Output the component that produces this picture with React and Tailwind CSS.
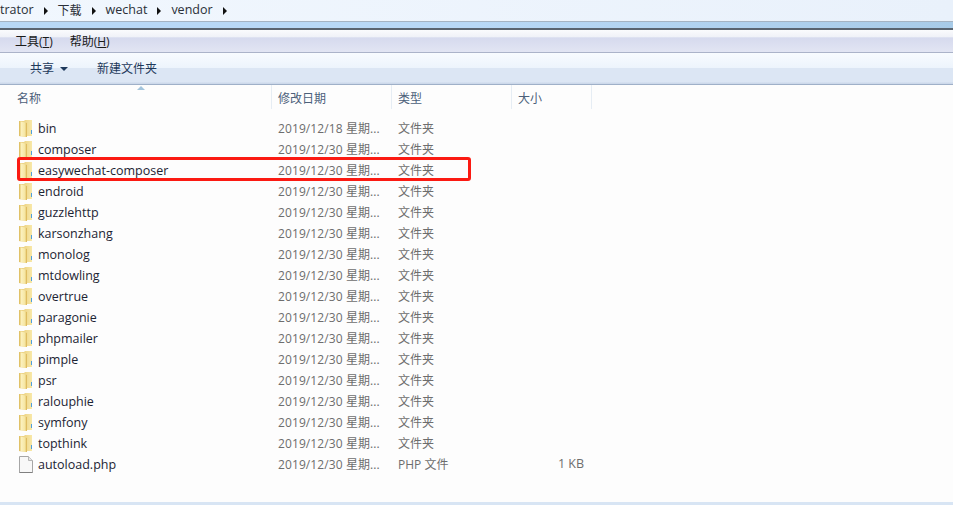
const FONT = "font-['Open_Sans','Noto_Sans_CJK_SC',sans-serif]";

const rows = [
  ['bin', '2019/12/18 星期...'],
  ['composer', '2019/12/30 星期...'],
  ['easywechat-composer', '2019/12/30 星期...'],
  ['endroid', '2019/12/30 星期...'],
  ['guzzlehttp', '2019/12/30 星期...'],
  ['karsonzhang', '2019/12/30 星期...'],
  ['monolog', '2019/12/30 星期...'],
  ['mtdowling', '2019/12/30 星期...'],
  ['overtrue', '2019/12/30 星期...'],
  ['paragonie', '2019/12/30 星期...'],
  ['phpmailer', '2019/12/30 星期...'],
  ['pimple', '2019/12/30 星期...'],
  ['psr', '2019/12/30 星期...'],
  ['ralouphie', '2019/12/30 星期...'],
  ['symfony', '2019/12/30 星期...'],
  ['topthink', '2019/12/30 星期...'],
];

function FolderIcon() {
  return (
    <svg width="14" height="17" viewBox="0 0 14 17" className="shrink-0">
      <defs>
        <linearGradient id="ffront" x1="0" x2="1" y1="0" y2="0">
          <stop offset="0" stopColor="#d9b550" />
          <stop offset="0.3" stopColor="#fbf0bd" />
          <stop offset="0.75" stopColor="#f6e6a2" />
          <stop offset="1" stopColor="#d6ae4a" />
        </linearGradient>
        <linearGradient id="fback" x1="0" x2="1" y1="0" y2="0">
          <stop offset="0" stopColor="#e6c873" />
          <stop offset="1" stopColor="#f8e8a8" />
        </linearGradient>
      </defs>
      <path d="M0 1 H5 L6 0 H13 V16 H8 V17 L0 16 Z" fill="url(#fback)" />
      <path d="M0 1 L8 3 V17 L0 16 Z" fill="url(#ffront)" />
      <path d="M12 10 H13 V14 H12 Z" fill="#4f9fdc" />
    </svg>
  );
}

function FileIcon() {
  return (
    <svg width="14" height="17" viewBox="0 0 14 17" className="shrink-0">
      <path d="M0.5 0.5 H9.5 L13.5 4.5 V16.5 H0.5 Z" fill="#f8f8f8" stroke="#a6a6a6" />
      <path d="M9.5 0.5 V4.5 H13.5" fill="#e8e8e8" stroke="#b5b5b5" />
      <path d="M0.5 16.5 H13.5" stroke="#808080" />
    </svg>
  );
}

function Caret() {
  return <span className="w-0 h-0 border-y-[4px] border-y-transparent border-l-[4px] border-l-[#111]" />;
}

function Row({ name, date, type = '文件夹', size = '', file = false }) {
  return (
    <div className="flex h-[21px] items-center">
      <div className="flex items-center w-[272px] pl-[19px]">
        <span className="w-[19px] flex">{file ? <FileIcon /> : <FolderIcon />}</span>
        <span className="mt-[2px] text-[12.5px] text-[#1c2433]">{name}</span>
      </div>
      <div className="w-[120px] pl-[6px] text-[12px] tracking-[0.1px] text-[#6d6d6d] whitespace-nowrap">{date}</div>
      <div className="w-[120px] pl-[6px] text-[12px] text-[#6d6d6d]">{type}</div>
      <div className="w-[72px] text-right text-[12.5px] text-[#6d6d6d]">{size}</div>
    </div>
  );
}

export default function App() {
  return (
    <div className={`${FONT} w-[953px] h-[505px] overflow-hidden bg-[#fdfdfd] flex flex-col`}>
      {/* address bar */}
      <div className="h-[21px] bg-gradient-to-r from-[#f1f7fe] to-[#e9f1fb] flex items-center gap-[10px] text-[12.5px] text-[#2a2f38]">
        <span>trator</span>
        <Caret />
        <span className="text-[12px]">下载</span>
        <Caret />
        <span>wechat</span>
        <Caret />
        <span>vendor</span>
        <Caret />
      </div>
      <div className="h-[9px] border-t border-t-[#a5b3c2] border-b-2 border-b-[#5a6470] bg-gradient-to-r from-[#b8d8f6] via-[#b8d8f6] to-[#a8cbe8]" />

      {/* menu bar */}
      <div className="h-[23px] pt-[2px] bg-[linear-gradient(#fafbfd_0,#f0f2f8_30%,#d6daee_36%,#e2e5f3_100%)] border-b border-b-[#abb3c9] flex items-center pl-[15px] gap-[17px] text-[12px] text-[#1a1a1a]">
        <span>工具(<u>T</u>)</span>
        <span>帮助(<u>H</u>)</span>
      </div>

      {/* toolbar */}
      <div className="h-[32px] pt-[1px] bg-[linear-gradient(#f8fbff_0,#edf4fc_48%,#dce6f4_50%,#dce6f4_92%,#c9d6e8_100%)] border-b border-b-[#9fb0c8] flex items-center text-[12px] text-[#1e395b]">
        <span className="ml-[30px]">共享</span>
        <span className="ml-[6px] w-0 h-0 border-x-[4px] border-x-transparent border-t-[4px] border-t-[#1e395b]" />
        <span className="ml-[29px]">新建文件夹</span>
      </div>

      {/* column headers */}
      <div className="relative h-[27px] flex items-start text-[12px] text-[#4c607a]">
        <span className="absolute left-[137px] top-[1px] w-0 h-0 border-x-[4px] border-x-transparent border-b-[4px] border-b-[#a3c4dc]" />
        <div className="w-[272px] pl-[17px] h-[24px] pt-[3px] flex items-center border-r border-r-[#e6edf4]">名称</div>
        <div className="w-[120px] pl-[6px] h-[24px] pt-[3px] flex items-center border-r border-r-[#e6edf4]">修改日期</div>
        <div className="w-[120px] pl-[6px] h-[24px] pt-[3px] flex items-center border-r border-r-[#e6edf4]">类型</div>
        <div className="w-[80px] pl-[6px] h-[24px] pt-[3px] flex items-center border-r border-r-[#e6edf4]">大小</div>
      </div>

      {/* file list */}
      <div className="relative flex-1 pt-[6px]">
        {rows.map(([name, date]) => (
          <Row key={name} name={name} date={date} />
        ))}
        <Row name="autoload.php" date="2019/12/30 星期..." type="PHP 文件" size="1 KB" file />
        {/* red annotation */}
        <div className="absolute left-[17px] top-[45px] w-[454px] h-[24px] border-[3px] border-[#fb1a12] rounded-[3px]" />
      </div>

      <div className="h-[3px] bg-[#d8e5f4]" />
    </div>
  );
}
